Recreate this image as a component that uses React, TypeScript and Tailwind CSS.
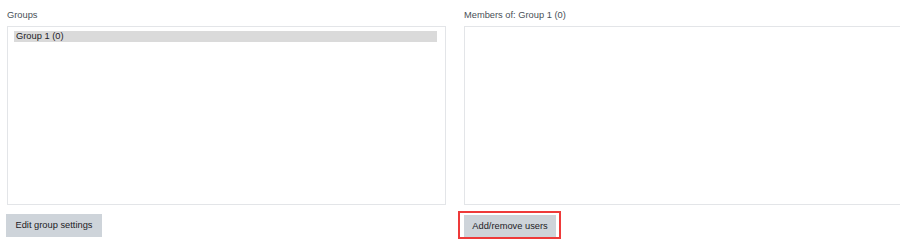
export default function App(): React.JSX.Element {
  return (
    <main
      className="w-[900px] h-[242px] overflow-hidden bg-white text-[9.3px] text-[#1d2125]"
      style={{ fontFamily: '"Liberation Sans", Arial, sans-serif' }}
    >
      <div className="flex gap-[18px] pl-[7px] pt-[9px]">
        {/* Groups column */}
        <div className="w-[439px] shrink-0 flex flex-col">
          <label className="h-[13px] leading-[13px] text-[#495057]">Groups</label>
          <div className="mt-[4px] h-[179px] border border-[#e3e5e8] bg-white pl-[6px] pr-[8px] pt-[4px]">
            <div className="h-[11px] leading-[11px] bg-[#dadada] pl-[2px]">Group 1 (0)</div>
          </div>
          <div className="mt-[9px] -ml-px">
            <button className="h-[23px] w-[96px] bg-[#ced4da] text-center leading-[23px]">
              Edit group settings
            </button>
          </div>
        </div>

        {/* Members column */}
        <div className="w-[439px] shrink-0 flex flex-col">
          <label className="h-[13px] leading-[13px] text-[#495057]">Members of: Group 1 (0)</label>
          <div className="mt-[4px] h-[179px] border border-[#e3e5e8] bg-white" />
          <div className="relative mt-[10px]">
            <button className="h-[22px] w-[92px] bg-[#ced4da] text-center leading-[22px]">
              Add/remove users
            </button>
            <div className="absolute left-[-6px] top-[-4px] w-[103px] h-[28px] border-2 border-[#ee3a3a] pointer-events-none" />
          </div>
        </div>
      </div>
    </main>
  )
}
